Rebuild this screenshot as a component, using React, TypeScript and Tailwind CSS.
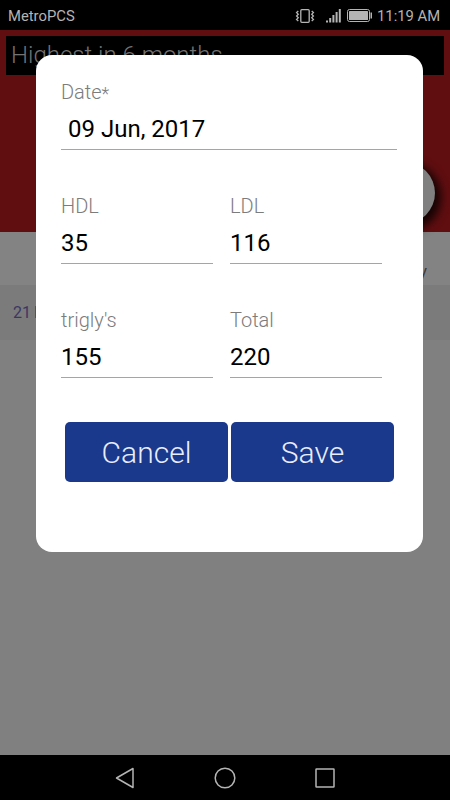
import React from 'react';

interface FieldProps {
  label: string;
  value: string;
}

const Field: React.FC<FieldProps> = ({ label, value }) => (
  <div className="h-[114px] w-[152px]">
    <div className="h-[26px] text-[20px] leading-[26px] font-light text-[#7c7c7c]">{label}</div>
    <div className="mt-[8px] h-[37px] border-b border-[#a5a5a5] text-[24px] leading-[32px] text-black">
      {value}
    </div>
  </div>
);

const StatusBar: React.FC = () => (
  <header className="flex h-[30px] items-center bg-black px-2 pt-[2px] text-[15px] text-[#b4b4b4]">
    <span className="flex-1 text-[14.8px]">MetroPCS</span>
    {/* Vibrate */}
    <svg width="20" height="14" viewBox="0 0 20 14" fill="none" stroke="#b4b4b4" className="mr-[11px] -mt-px">
      <rect x="5.800" y="0.700" width="8.400" height="12.600" rx="1" strokeWidth="1.300" />
      <path d="M3.300 2 L1.600 3.600 L3.300 5.200 L1.600 7 L3.300 8.800 L1.600 10.400 L3.300 12 M16.700 2 L18.400 3.600 L16.700 5.200 L18.400 7 L16.700 8.800 L18.400 10.400 L16.700 12" strokeWidth="1.300" />
    </svg>
    {/* Signal */}
    <svg width="16" height="14" viewBox="0 0 16 14" fill="#b4b4b4" className="mr-[5px] -mt-px">
      <path d="M0 11.500h2v2H0z M3.200 9h2v4.500h-2z M6.400 6h2v7.500h-2z M9.600 3h2v10.500h-2z M12.800 0h2v13.500h-2z" />
    </svg>
    {/* Battery */}
    <svg width="26" height="13" viewBox="0 0 26 13" className="mr-[4px] -mt-[2px]">
      <rect x="0.500" y="0.500" width="22" height="12" rx="2" fill="none" stroke="#b4b4b4" />
      <rect x="2" y="2" width="19" height="9" rx="0.500" fill="#b4b4b4" />
      <path d="M23.500 3.500h1.500v6h-1.500z" fill="#b4b4b4" />
    </svg>
    <span className="w-[65px] text-[14.8px] whitespace-nowrap">11:19 AM</span>
  </header>
);

const App: React.FC = () => {
  return (
    <div
      className="relative flex h-[800px] w-[450px] flex-col overflow-hidden bg-[#808080]"
      style={{ fontFamily: 'Roboto, sans-serif' }}
    >
      <StatusBar />

      {/* Dimmed page behind the dialog */}
      <main className="flex-1">
        <section className="relative h-[202px] bg-[#600e10] px-[6px] pt-[6px]">
          <div className="h-[39px] bg-black pl-[5px] text-[24px] leading-[39px] font-light text-[#737373]">
            Highest in 6 months
          </div>
          <div className="absolute top-[132px] right-[15px] size-[62px] rounded-full bg-[#808080] shadow-[3px_4px_10px_3px_rgba(0,0,0,0.8)]" />
        </section>
        <div className="flex h-[53px] items-center justify-end bg-[#838383] pt-[26px] pr-[23px] text-[17px] text-[#3c3c3c]">
          Delete by day
        </div>
        <div className="flex h-[55px] items-center gap-[3px] bg-[#7b7b7b] pl-[13px] text-[16px] text-[#3b3763]">
          <span>21</span>
          <span>Mar</span>
        </div>
      </main>

      {/* Navigation bar */}
      <nav className="flex h-[45px] items-center justify-center gap-[76px] bg-black">
        <svg width="24" height="24" viewBox="0 0 24 24" fill="none" stroke="#b4b4b4" strokeWidth="1.500">
          <path d="M20 2.500v19L3.500 12z" strokeLinejoin="round" />
        </svg>
        <svg width="24" height="24" viewBox="0 0 24 24" fill="none" stroke="#b4b4b4" strokeWidth="1.500">
          <circle cx="12" cy="12" r="9.800" />
        </svg>
        <svg width="24" height="24" viewBox="0 0 24 24" fill="none" stroke="#b4b4b4" strokeWidth="1.500">
          <rect x="3" y="3" width="18" height="18" rx="0.500" />
        </svg>
      </nav>

      {/* Dialog */}
      <div className="absolute top-[55px] left-[36px] h-[497px] w-[387px] rounded-[16px] bg-white pt-[24px] pl-[25px]">
        <div className="h-[114px] w-[336px]">
          <div className="flex h-[26px] text-[20px] leading-[26px] font-light text-[#7c7c7c]">
            Date<span className="pt-[2px] text-[18px]">*</span>
          </div>
          <div className="mt-[8px] h-[37px] border-b border-[#a5a5a5] pl-[7px] text-[24px] leading-[32px] text-black">
            09 Jun, 2017
          </div>
        </div>
        <div className="flex gap-[17px]">
          <Field label="HDL" value="35" />
          <Field label="LDL" value="116" />
        </div>
        <div className="flex gap-[17px]">
          <Field label="trigly's" value="155" />
          <Field label="Total" value="220" />
        </div>
        <div className="mt-[1px] ml-[4px] flex gap-[3px] text-[30px] font-light text-[#e8edfa]">
          <button className="h-[60px] w-[163px] rounded-[5px] bg-[#1a388c]">Cancel</button>
          <button className="h-[60px] w-[163px] rounded-[5px] bg-[#1a388c]">Save</button>
        </div>
      </div>
    </div>
  );
};

export default App;
